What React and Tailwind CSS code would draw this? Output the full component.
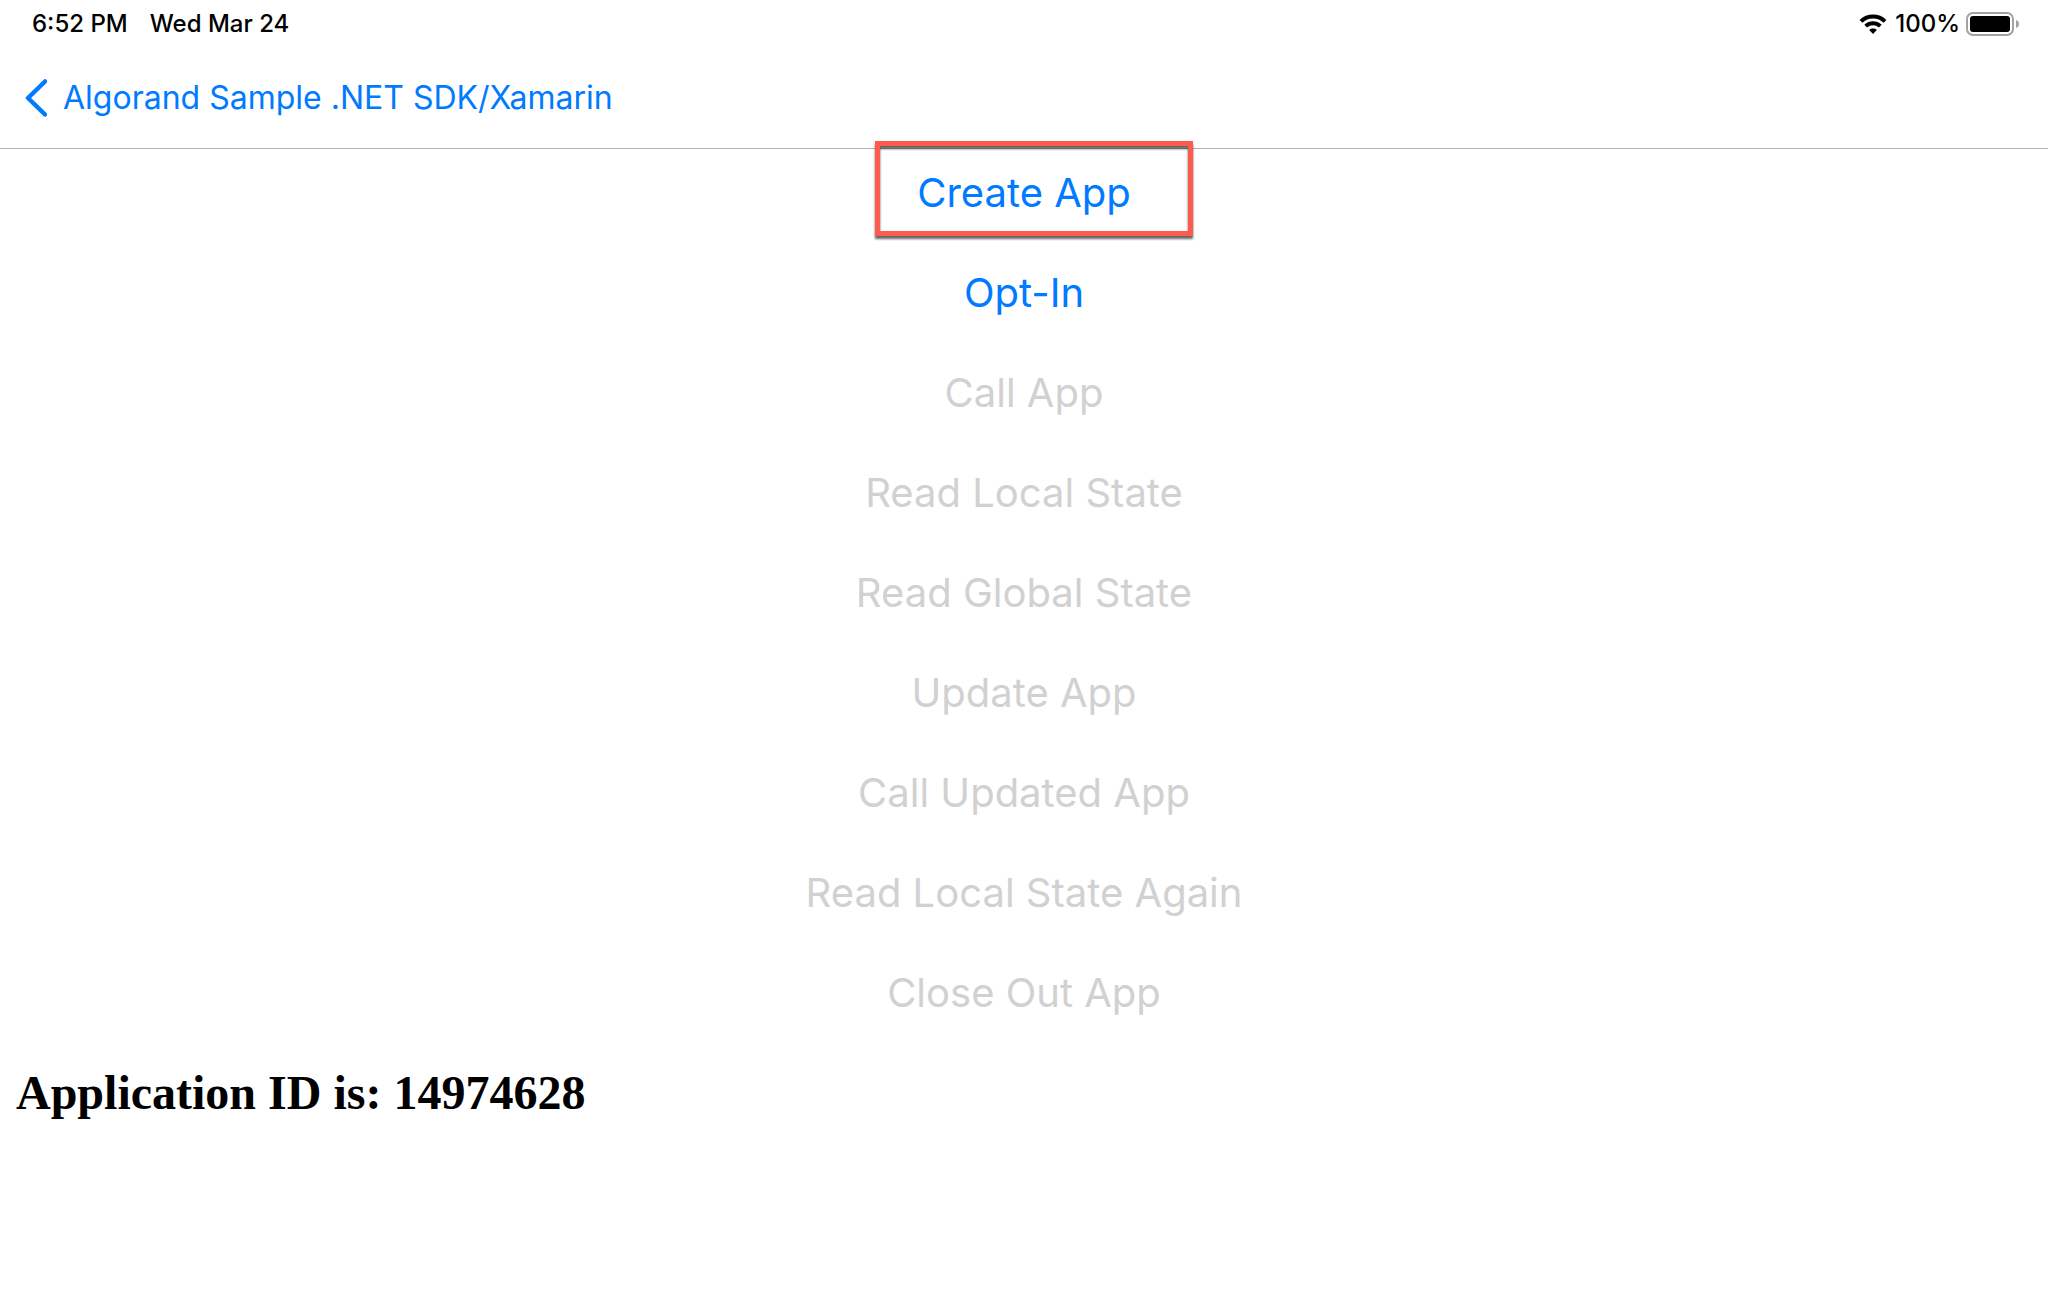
import React from 'react';

const ACTIONS = [
  { label: 'Create App', enabled: true, highlighted: true },
  { label: 'Opt-In', enabled: true },
  { label: 'Call App', enabled: false },
  { label: 'Read Local State', enabled: false },
  { label: 'Read Global State', enabled: false },
  { label: 'Update App', enabled: false },
  { label: 'Call Updated App', enabled: false },
  { label: 'Read Local State Again', enabled: false },
  { label: 'Close Out App', enabled: false },
];

const WifiIcon = () => (
  <svg className="w-7 h-5" viewBox="0 0 28 20" fill="none" stroke="black" strokeWidth="4" aria-hidden="true">
    <path d="M2 7.4C8.6 0.9 19.4 0.9 26 7.4" />
    <path d="M6.7 12.1C10.8 8.2 17.2 8.2 21.3 12.1" />
    <path d="M14 20l-3.8-4c2.2-1.9 5.4-1.9 7.6 0z" fill="black" stroke="none" />
  </svg>
);

const BatteryIcon = () => (
  <svg className="w-[54px] h-6" viewBox="0 0 54 24" aria-hidden="true">
    <rect x="1" y="1" width="46" height="22" rx="6" fill="none" stroke="#a3a3a3" strokeWidth="2" />
    <rect x="4" y="4" width="40" height="16" rx="3" fill="black" />
    <path d="M50 8c4 1.2 4 6.8 0 8z" fill="#a3a3a3" />
  </svg>
);

const StatusBar = () => (
  <div className="flex h-12 items-center justify-between pl-8 pr-7 text-2xl font-medium text-black">
    <div className="flex gap-[22px]">
      <span>6:52 PM</span>
      <span>Wed Mar 24</span>
    </div>
    <div className="flex items-center">
      <WifiIcon />
      <span className="ml-2 mr-1.5">100%</span>
      <BatteryIcon />
    </div>
  </div>
);

const NavBar = () => (
  <nav className="flex h-[101px] items-center border-b border-[#b2b2b2] pl-[25px]">
    <a href="#back" className="flex items-center gap-4 text-[32px] leading-10 text-[#007aff]">
      <svg className="h-[38px] w-[22px]" viewBox="0 0 22 38" fill="none" aria-hidden="true">
        <path d="M20 2.5L3 19L20 35.5" stroke="currentColor" strokeWidth="4.5" strokeLinecap="round" strokeLinejoin="round" />
      </svg>
      Algorand Sample .NET SDK/Xamarin
    </a>
  </nav>
);

const ActionButton = ({ label, enabled, highlighted }) => (
  <div className="relative flex h-[100px] items-start">
    <button
      type="button"
      disabled={!enabled}
      className="h-[88px] text-[40px] text-[#007aff] disabled:text-[#d1d1d1]"
    >
      {label}
    </button>
    {/* Outline around the step to run first */}
    {highlighted && (
      <div className="pointer-events-none absolute -left-[42px] -right-[62px] -top-2 h-[95px] border-[5px] border-[#ff5a4d] drop-shadow-[0_3px_1px_rgba(0,0,0,0.6)]" />
    )}
  </div>
);

const App = () => {
  return (
    <div className="min-h-screen bg-white font-['Inter','Liberation_Sans',sans-serif]">
      <StatusBar />
      <NavBar />
      <main>
        <div className="flex flex-col items-center">
          {ACTIONS.map((action) => (
            <ActionButton key={action.label} {...action} />
          ))}
        </div>
        <h1 className="px-4 pt-5 text-5xl font-bold text-black font-['Liberation_Serif',serif]">
          Application ID is: 14974628
        </h1>
      </main>
    </div>
  );
};

export default App;
